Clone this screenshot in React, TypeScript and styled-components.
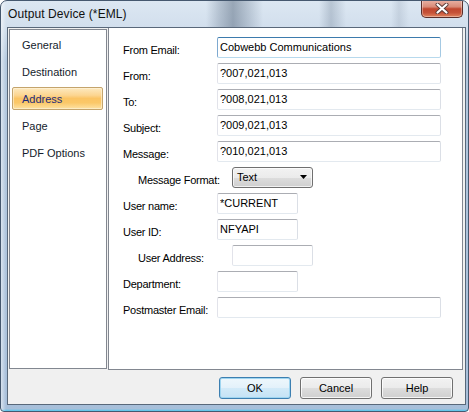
import React from "react";
import styled, { createGlobalStyle, css } from "styled-components";

const GlobalStyle = createGlobalStyle`
  html, body { margin: 0; padding: 0; background: #ffffff; }
  body { width: 469px; height: 412px; overflow: hidden; font-family: "Liberation Sans", Arial, sans-serif; }
  * { box-sizing: border-box; }
`;

const Window = styled.div`
  width: 469px;
  height: 412px;
  display: flex;
  flex-direction: column;
  border: 1px solid #45586f;
  border-radius: 7px 7px 4px 4px;
  overflow: hidden;
  background:
    linear-gradient(90deg, rgba(255,255,255,0.55) 0px, rgba(255,255,255,0) 5px),
    linear-gradient(0deg, rgba(70,200,240,0.9) 0px, rgba(70,200,240,0) 2px),
    linear-gradient(180deg, #dce7f2 0px, #d2dfed 26px, #b3c8de 60px, #a7bfda 100%);
`;

const TitleBar = styled.div`
  height: 26px;
  flex: none;
  display: flex;
  align-items: center;
  padding-left: 7px;
  background: linear-gradient(
    90deg,
    rgba(255, 255, 255, 0) 0px,
    rgba(255, 255, 255, 0) 205px,
    rgba(90, 108, 130, 0.28) 218px,
    rgba(70, 88, 110, 0.45) 232px,
    rgba(90, 108, 130, 0.25) 248px,
    rgba(255, 255, 255, 0) 262px,
    rgba(255, 255, 255, 0) 318px,
    rgba(90, 108, 130, 0.28) 330px,
    rgba(255, 255, 255, 0) 345px,
    rgba(255, 255, 255, 0) 390px,
    rgba(120, 135, 155, 0.2) 398px,
    rgba(255, 255, 255, 0) 408px
  );
`;

const Title = styled.span`
  font-family: "Liberation Sans", Arial, sans-serif;
  font-size: 12px;
  color: #101010;
  letter-spacing: 0.1px;
  padding-bottom: 1px;
`;

const CloseButton = styled.div`
  align-self: flex-start;
  margin-left: auto;
  margin-right: 5px;
  margin-top: -1px;
  width: 42px;
  height: 18px;
  border: 1px solid #5a2e2a;
  border-top: none;
  border-radius: 0 0 5px 5px;
  background: linear-gradient(
    180deg,
    #e9b3a6 0%,
    #d98b78 40%,
    #c0472f 52%,
    #c65238 75%,
    #e0845f 100%
  );
  box-shadow: inset 0 0 0 1px rgba(255, 255, 255, 0.35);
  display: flex;
  align-items: center;
  justify-content: center;
`;

const Client = styled.div`
  flex: 1;
  margin: 0 2px 6px 6px;
  border: 1px solid #59687a;
  background: #f0f0f0;
  display: flex;
  flex-direction: column;
  padding: 0 2px 0 1px;
`;

const Body = styled.div`
  display: flex;
  align-items: flex-start;
  gap: 1px;
`;

const NavPanel = styled.div`
  width: 98px;
  height: 340px;
  margin-top: 1px;
  border: 1px solid #828790;
  background: #ffffff;
  padding: 3px 0 0 2px;
  display: flex;
  flex-direction: column;
  gap: 4px;
`;

const NavItem = styled.div<{ $active?: boolean }>`
  width: 91px;
  height: 23px;
  display: flex;
  align-items: center;
  padding-left: 9px;
  border: 1px solid transparent;
  border-radius: 2px;
  font-size: 11px;
  color: #141c2c;
  ${(p) =>
    p.$active &&
    css`
      border-color: #c4a46c;
      color: #1e2c7c;
      background: linear-gradient(
        180deg,
        #fde9c0 0%,
        #fcd590 35%,
        #fbc464 50%,
        #fbc868 70%,
        #fde2a4 100%
      );
      box-shadow: inset 0 0 0 1px rgba(255, 245, 220, 0.6);
    `}
`;

const ContentPanel = styled.div`
  width: 355px;
  height: 342px;
  border: 1px solid #828790;
  border-top: none;
  background: #ffffff;
  padding: 9px 0 0 14px;
  display: flex;
  flex-direction: column;
  gap: 5px;
`;

const Row = styled.div<{ $indent?: boolean }>`
  display: flex;
  align-items: center;
  height: 21px;
  padding-left: ${(p) => (p.$indent ? 15 : 0)}px;
`;

const Label = styled.span`
  width: 94px;
  flex: none;
  font-size: 11px;
  letter-spacing: -0.25px;
  color: #000000;
  padding-top: 4px;
  white-space: nowrap;
`;

const Field = styled.input<{ $wide?: boolean; $focused?: boolean }>`
  width: ${(p) => (p.$wide ? 224 : 81)}px;
  height: 21px;
  margin: 0;
  padding: 0 2px 1px 2px;
  font-family: "Liberation Sans", Arial, sans-serif;
  font-size: 11px;
  color: #000000;
  background: #ffffff;
  border: 1px solid;
  border-color: #abadb3 #dbdfe6 #e3e9ef #e2e3ea;
  border-radius: 2px;
  outline: none;
  ${(p) =>
    p.$focused &&
    css`
      border-color: #3d7bad #a4c9e3 #b7d9ed #7ea9d0;
    `}
`;

const Select = styled.div`
  width: 81px;
  height: 21px;
  display: flex;
  align-items: center;
  justify-content: space-between;
  padding: 0 5px 2px 4px;
  border: 1px solid #707070;
  border-radius: 3px;
  background: linear-gradient(180deg, #f2f2f2 0%, #ebebeb 50%, #dddddd 51%, #cfcfcf 100%);
  box-shadow: inset 0 0 0 1px rgba(255, 255, 255, 0.7);
  font-size: 11px;
  color: #000000;
`;

const ButtonBar = styled.div`
  display: flex;
  justify-content: flex-end;
  gap: 9px;
  margin-top: 7px;
  padding-right: 10px;
`;

const Button = styled.div<{ $default?: boolean }>`
  width: 72px;
  height: 22px;
  display: flex;
  align-items: center;
  justify-content: center;
  font-size: 11px;
  color: #000000;
  border: 1px solid #707070;
  border-radius: 3px;
  background: linear-gradient(180deg, #f2f2f2 0%, #ebebeb 50%, #dddddd 51%, #cfcfcf 100%);
  box-shadow: inset 0 0 0 1px rgba(255, 255, 255, 0.8);
  ${(p) =>
    p.$default &&
    css`
      border-color: #3c7fb1;
      background: linear-gradient(180deg, #eef7fc 0%, #e3f1fa 50%, #d2eaf8 51%, #c4e2f5 100%);
      box-shadow: inset 0 0 0 1px #9fd5f0;
    `}
`;

const CloseGlyph = () => (
  <svg width="14" height="11" viewBox="0 0 14 11">
    <path d="M2.5 1.5 L11.5 9.5 M11.5 1.5 L2.5 9.5" stroke="#5a3a36" strokeWidth="4" strokeLinecap="round" />
    <path d="M2.5 1.5 L11.5 9.5 M11.5 1.5 L2.5 9.5" stroke="#ffffff" strokeWidth="2.2" strokeLinecap="round" />
  </svg>
);

const Arrow = () => (
  <svg width="7" height="4" viewBox="0 0 7 4">
    <path d="M0 0 H7 L3.5 4 Z" fill="#000000" />
  </svg>
);

const navItems = ["General", "Destination", "Address", "Page", "PDF Options"];

type FieldRow = {
  label: string;
  value?: string;
  wide?: boolean;
  indent?: boolean;
  focused?: boolean;
  select?: boolean;
};

const rows: FieldRow[] = [
  { label: "From Email:", value: "Cobwebb Communications", wide: true, focused: true },
  { label: "From:", value: "?007,021,013", wide: true },
  { label: "To:", value: "?008,021,013", wide: true },
  { label: "Subject:", value: "?009,021,013", wide: true },
  { label: "Message:", value: "?010,021,013", wide: true },
  { label: "Message Format:", value: "Text", indent: true, select: true },
  { label: "User name:", value: "*CURRENT" },
  { label: "User ID:", value: "NFYAPI" },
  { label: "User Address:", value: "", indent: true },
  { label: "Department:", value: "" },
  { label: "Postmaster Email:", value: "", wide: true },
];

export default function App() {
  return (
    <>
      <GlobalStyle />
      <Window>
        <TitleBar>
          <Title>Output Device (*EML)</Title>
          <CloseButton>
            <CloseGlyph />
          </CloseButton>
        </TitleBar>
        <Client>
          <Body>
            <NavPanel>
              {navItems.map((item) => (
                <NavItem key={item} $active={item === "Address"}>
                  {item}
                </NavItem>
              ))}
            </NavPanel>
            <ContentPanel>
              {rows.map((r) => (
                <Row key={r.label} $indent={r.indent}>
                  <Label>{r.label}</Label>
                  {r.select ? (
                    <Select>
                      <span>{r.value}</span>
                      <Arrow />
                    </Select>
                  ) : (
                    <Field readOnly value={r.value} $wide={r.wide} $focused={r.focused} />
                  )}
                </Row>
              ))}
            </ContentPanel>
          </Body>
          <ButtonBar>
            <Button $default>OK</Button>
            <Button>Cancel</Button>
            <Button>Help</Button>
          </ButtonBar>
        </Client>
      </Window>
    </>
  );
}
